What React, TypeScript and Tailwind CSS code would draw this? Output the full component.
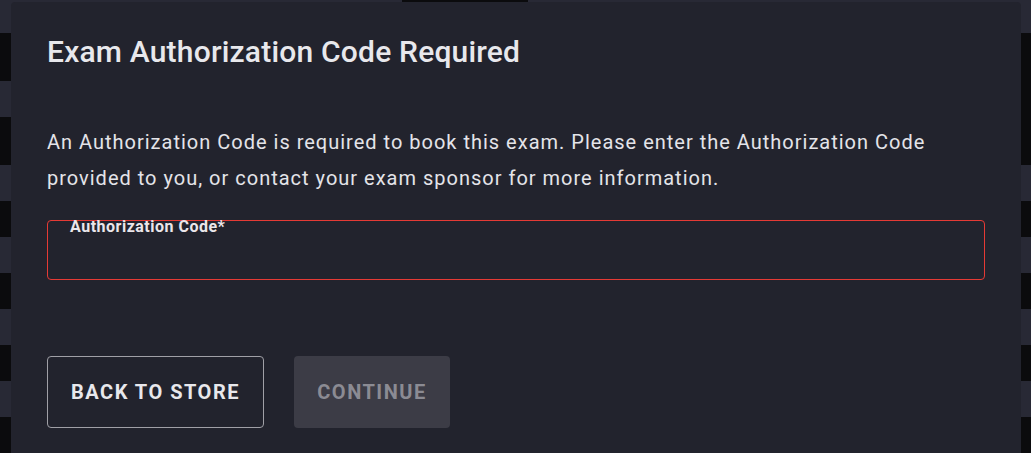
const LEFT = [
  { h: 33, dark: false },
  { h: 48, dark: true },
  { h: 36, dark: false },
  { h: 48, dark: true },
  { h: 36, dark: false },
  { h: 36, dark: true },
  { h: 36, dark: false },
  { h: 36, dark: true },
  { h: 36, dark: false },
  { h: 36, dark: true },
  { h: 36, dark: false },
  { h: 36, dark: true },
];

const RIGHT = [
  { h: 33, dark: false },
  { h: 132, dark: true },
  { h: 36, dark: false },
  { h: 36, dark: true },
  { h: 36, dark: false },
  { h: 36, dark: true },
  { h: 36, dark: false },
  { h: 36, dark: true },
  { h: 36, dark: false },
  { h: 36, dark: true },
];

// The page behind the dialog only shows as a striped edge on each side.
function Strip({ blocks, width }: { blocks: { h: number; dark: boolean }[]; width: string }) {
  return (
    <div className={`flex shrink-0 flex-col ${width}`}>
      {blocks.map((b, i) => (
        <div
          key={i}
          className={b.dark ? "bg-[#0b0b0d]" : "bg-[#282935]"}
          style={{ height: b.h }}
        />
      ))}
    </div>
  );
}

export default function App() {
  return (
    <div
      className="flex h-[453px] w-[1031px] overflow-hidden bg-[#282935] text-[#e6e6eb]"
      style={{ fontFamily: "Roboto, 'Liberation Sans', sans-serif" }}
    >
      <Strip blocks={LEFT} width="w-[11px]" />
      <div className="flex min-w-0 flex-1 flex-col">
        <div className="flex h-[2px] shrink-0">
          <div className="w-[391px]" />
          <div className="w-[126px] bg-[#0b0b0d]" />
        </div>
        <div
          role="dialog"
          aria-labelledby="auth-title"
          className="flex-1 rounded-t-[4px] bg-[#22232d] px-9 pt-[30px]"
        >
          <h2
            id="auth-title"
            className="text-[30px] font-medium leading-[40px] tracking-[0.2px] text-[#e8e8ec]"
          >
            Exam Authorization Code Required
          </h2>
          <p className="mt-[52px] text-[20px] leading-[36px] tracking-[1px] text-[#e4e4e9]">
            An Authorization Code is required to book this exam. Please enter the Authorization Code
            provided to you, or contact your exam sponsor for more information.
          </p>
          <label className="relative mt-[24px] block h-[60px] w-[938px] rounded-[4px] border border-[#e53a35]">
            <span className="absolute left-[22px] top-[-3px] text-[16px] font-bold leading-[18px] tracking-[0.5px] text-[#ebe6ea]">
              Authorization Code*
            </span>
            <input
              aria-label="Authorization Code"
              className="h-full w-full bg-transparent px-[22px] pt-4 text-[16px] outline-none"
            />
          </label>
          <div className="mt-[76px] flex gap-[30px]">
            <button className="h-[72px] w-[217px] rounded-[4px] border border-[#a0a0a6] text-[20px] font-bold tracking-[1.5px] text-[#e8e8ec]">
              BACK TO STORE
            </button>
            <button
              disabled
              className="h-[72px] w-[156px] rounded-[4px] bg-[#3c3c46] text-[20px] font-bold tracking-[1.5px] text-[#8b8b93]"
            >
              CONTINUE
            </button>
          </div>
        </div>
      </div>
      <Strip blocks={RIGHT} width="w-[10px]" />
    </div>
  );
}
